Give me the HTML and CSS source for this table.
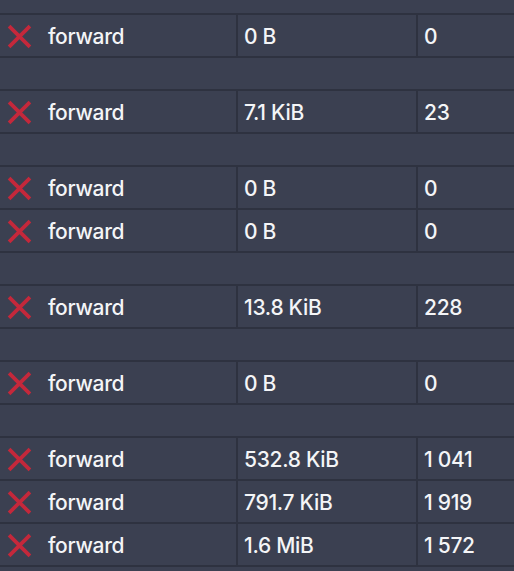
FILE: index.html
```html
<!DOCTYPE html>
<html>
<head>
<meta charset="utf-8">
<link rel="stylesheet" href="styles.css">
</head>
<body>
<div class="list">
  <div class="spacer top"></div>
  <div class="group">
    <div class="row"><div class="c1"><svg class="x" viewBox="0 0 24 24"><path d="M2 2L22 22M22 2L2 22"/></svg><span>forward</span></div><div class="c2">0 B</div><div class="c3">0</div></div>
  </div>
  <div class="spacer"></div>
  <div class="group">
    <div class="row"><div class="c1"><svg class="x" viewBox="0 0 24 24"><path d="M2 2L22 22M22 2L2 22"/></svg><span>forward</span></div><div class="c2">7.1 KiB</div><div class="c3">23</div></div>
  </div>
  <div class="spacer"></div>
  <div class="group">
    <div class="row"><div class="c1"><svg class="x" viewBox="0 0 24 24"><path d="M2 2L22 22M22 2L2 22"/></svg><span>forward</span></div><div class="c2">0 B</div><div class="c3">0</div></div>
    <div class="row"><div class="c1"><svg class="x" viewBox="0 0 24 24"><path d="M2 2L22 22M22 2L2 22"/></svg><span>forward</span></div><div class="c2">0 B</div><div class="c3">0</div></div>
  </div>
  <div class="spacer"></div>
  <div class="group">
    <div class="row"><div class="c1"><svg class="x" viewBox="0 0 24 24"><path d="M2 2L22 22M22 2L2 22"/></svg><span>forward</span></div><div class="c2">13.8 KiB</div><div class="c3">228</div></div>
  </div>
  <div class="spacer"></div>
  <div class="group">
    <div class="row"><div class="c1"><svg class="x" viewBox="0 0 24 24"><path d="M2 2L22 22M22 2L2 22"/></svg><span>forward</span></div><div class="c2">0 B</div><div class="c3">0</div></div>
  </div>
  <div class="spacer"></div>
  <div class="group">
    <div class="row"><div class="c1"><svg class="x" viewBox="0 0 24 24"><path d="M2 2L22 22M22 2L2 22"/></svg><span>forward</span></div><div class="c2">532.8 KiB</div><div class="c3">1 041</div></div>
    <div class="row"><div class="c1"><svg class="x" viewBox="0 0 24 24"><path d="M2 2L22 22M22 2L2 22"/></svg><span>forward</span></div><div class="c2">791.7 KiB</div><div class="c3">1 919</div></div>
    <div class="row"><div class="c1"><svg class="x" viewBox="0 0 24 24"><path d="M2 2L22 22M22 2L2 22"/></svg><span>forward</span></div><div class="c2">1.6 MiB</div><div class="c3">1 572</div></div>
  </div>
</div>
</body>
</html>
```
FILE: styles.css
```css
html, body {
  margin: 0;
  padding: 0;
  background: #3b4051;
}
body {
  font-family: "Inter", "Noto Sans", sans-serif;
  color: #f4f5f7;
  font-size: 21px;
  font-weight: 500;
  letter-spacing: -0.3px;
  width: 514px;
  height: 571px;
  overflow: hidden;
}
.list {
  display: flex;
  flex-direction: column;
}
.spacer {
  height: 31px;
}
.spacer.top {
  height: 13px;
}
.group {
  display: flex;
  flex-direction: column;
  border-top: 2px solid #2e3240;
}
.row {
  display: grid;
  grid-template-columns: 236px 180px 98px;
  height: 41px;
  border-bottom: 2px solid #2e3240;
}
.row > div {
  display: flex;
  align-items: center;
  padding-top: 2px;
}
.c1 {
  padding-left: 7px;
}
.c2, .c3 {
  border-left: 2px solid #2e3240;
  padding-left: 6px;
}
.x {
  width: 25px;
  height: 25px;
  margin-right: 16px;
  flex: none;
}
.x path {
  stroke: #c4283b;
  stroke-width: 3.6;
  fill: none;
}
```
